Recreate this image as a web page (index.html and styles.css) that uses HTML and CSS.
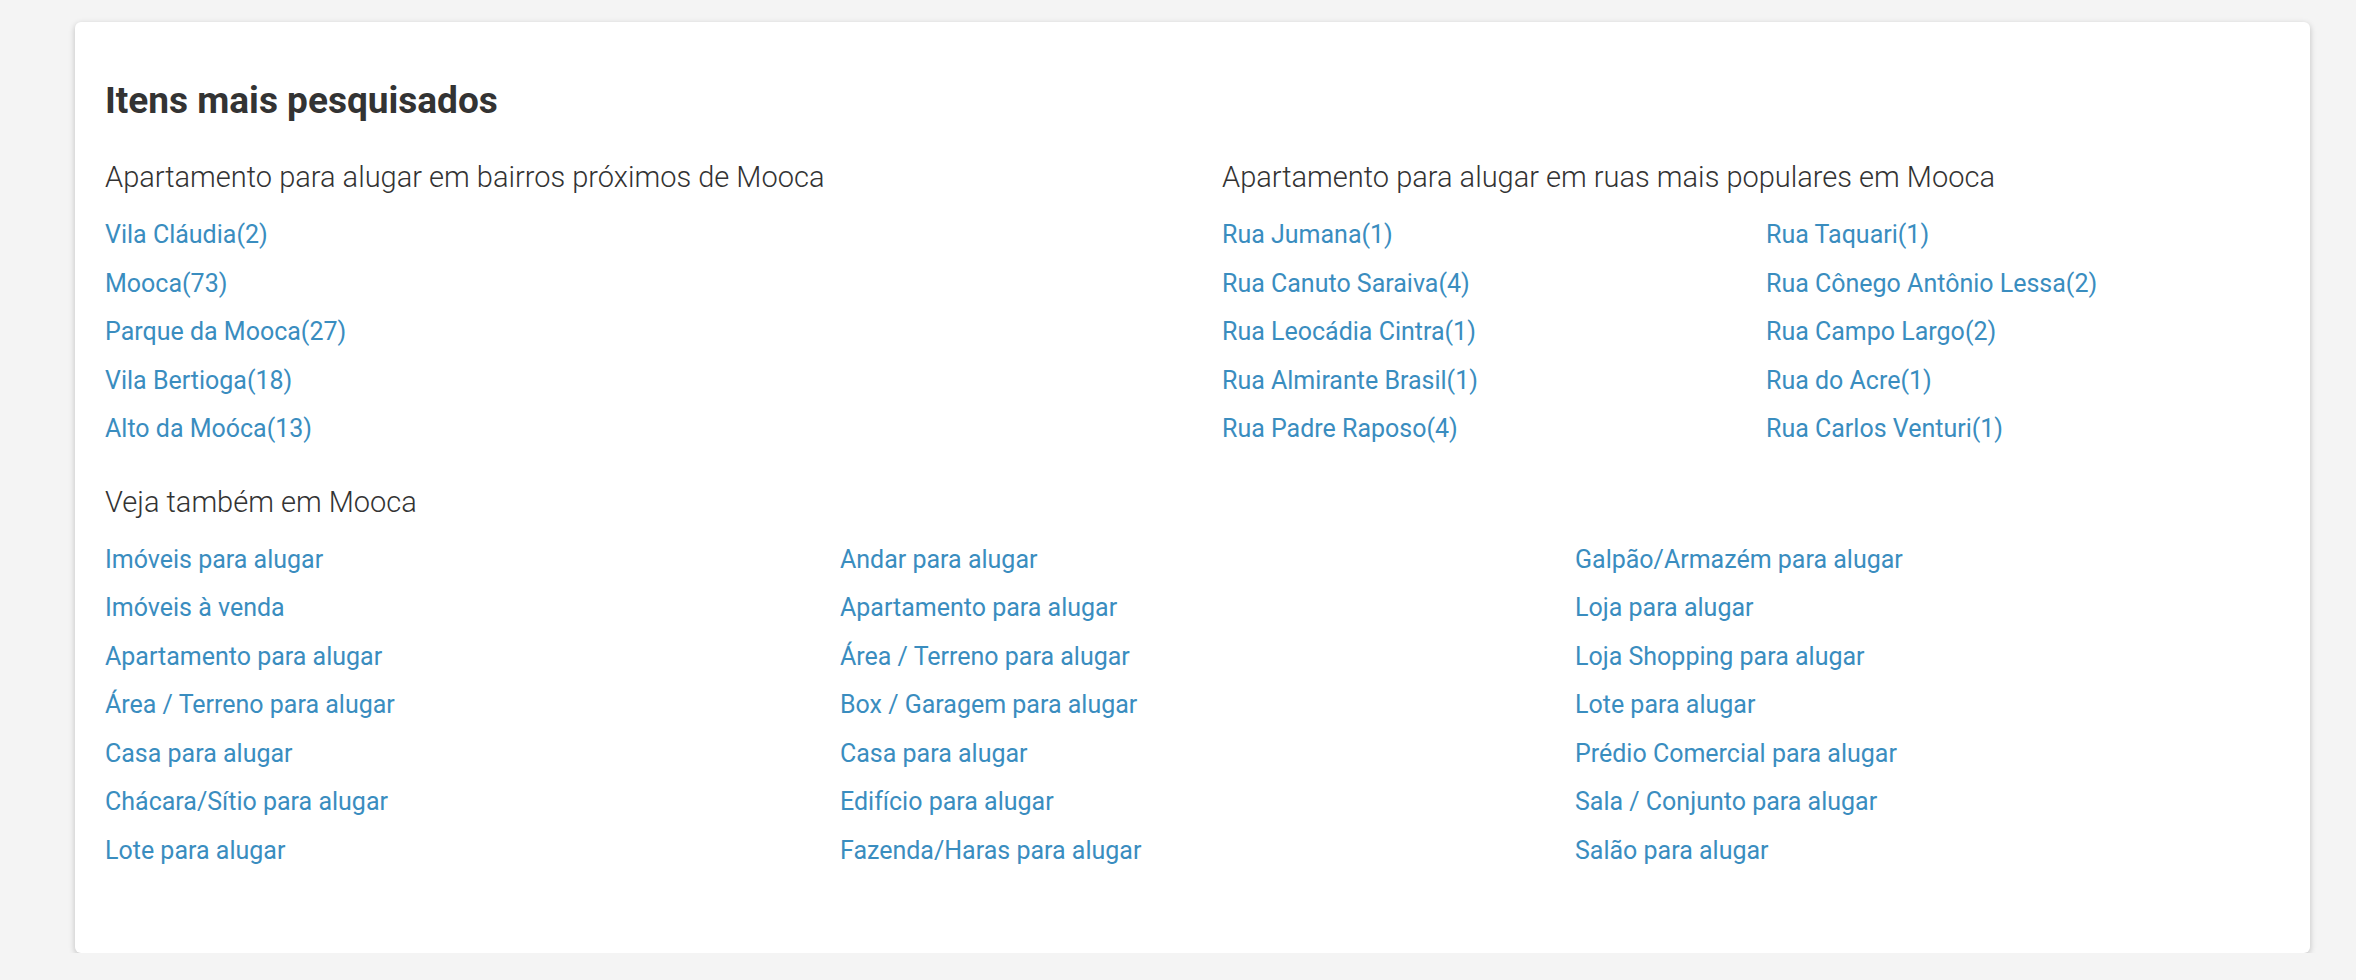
FILE: index.html
```html
<!DOCTYPE html>
<html lang="pt-BR">
<head>
<meta charset="utf-8">
<title>Itens mais pesquisados</title>
<link rel="stylesheet" href="styles.css">
</head>
<body>
<section class="card">
  <h2 class="card-title">Itens mais pesquisados</h2>
  <div class="top-row">
    <div class="group group-left">
      <h3 class="group-title">Apartamento para alugar em bairros próximos de Mooca</h3>
      <ul class="link-list">
        <li><a href="#">Vila Cláudia(2)</a></li>
        <li><a href="#">Mooca(73)</a></li>
        <li><a href="#">Parque da Mooca(27)</a></li>
        <li><a href="#">Vila Bertioga(18)</a></li>
        <li><a href="#">Alto da Moóca(13)</a></li>
      </ul>
    </div>
    <div class="group group-right">
      <h3 class="group-title">Apartamento para alugar em ruas mais populares em Mooca</h3>
      <div class="two-cols">
        <ul class="link-list">
          <li><a href="#">Rua Jumana(1)</a></li>
          <li><a href="#">Rua Canuto Saraiva(4)</a></li>
          <li><a href="#">Rua Leocádia Cintra(1)</a></li>
          <li><a href="#">Rua Almirante Brasil(1)</a></li>
          <li><a href="#">Rua Padre Raposo(4)</a></li>
        </ul>
        <ul class="link-list">
          <li><a href="#">Rua Taquari(1)</a></li>
          <li><a href="#">Rua Cônego Antônio Lessa(2)</a></li>
          <li><a href="#">Rua Campo Largo(2)</a></li>
          <li><a href="#">Rua do Acre(1)</a></li>
          <li><a href="#">Rua Carlos Venturi(1)</a></li>
        </ul>
      </div>
    </div>
  </div>
  <div class="group group-bottom">
    <h3 class="group-title">Veja também em Mooca</h3>
    <div class="three-cols">
      <ul class="link-list">
        <li><a href="#">Imóveis para alugar</a></li>
        <li><a href="#">Imóveis à venda</a></li>
        <li><a href="#">Apartamento para alugar</a></li>
        <li><a href="#">Área / Terreno para alugar</a></li>
        <li><a href="#">Casa para alugar</a></li>
        <li><a href="#">Chácara/Sítio para alugar</a></li>
        <li><a href="#">Lote para alugar</a></li>
      </ul>
      <ul class="link-list">
        <li><a href="#">Andar para alugar</a></li>
        <li><a href="#">Apartamento para alugar</a></li>
        <li><a href="#">Área / Terreno para alugar</a></li>
        <li><a href="#">Box / Garagem para alugar</a></li>
        <li><a href="#">Casa para alugar</a></li>
        <li><a href="#">Edifício para alugar</a></li>
        <li><a href="#">Fazenda/Haras para alugar</a></li>
      </ul>
      <ul class="link-list">
        <li><a href="#">Galpão/Armazém para alugar</a></li>
        <li><a href="#">Loja para alugar</a></li>
        <li><a href="#">Loja Shopping para alugar</a></li>
        <li><a href="#">Lote para alugar</a></li>
        <li><a href="#">Prédio Comercial para alugar</a></li>
        <li><a href="#">Sala / Conjunto para alugar</a></li>
        <li><a href="#">Salão para alugar</a></li>
      </ul>
    </div>
  </div>
</section>
</body>
</html>
```

FILE: styles.css
```css
html, body {
  margin: 0;
  padding: 0;
}

body {
  background: #f4f4f4;
  font-family: Roboto, "Liberation Sans", sans-serif;
  color: #333;
  padding: 22px 0 0 75px;
}

.card {
  box-sizing: border-box;
  width: 2235px;
  background: #fff;
  border-radius: 6px;
  box-shadow: 0 2px 6px rgba(0, 0, 0, 0.22);
  padding: 57px 0 78px 30px;
}

.card-title {
  margin: 0 0 36px;
  font-size: 37px;
  line-height: 44px;
  font-weight: 700;
  color: #333;
}

.top-row {
  display: flex;
}

.group-left {
  width: 1117px;
  flex: none;
}

.group-right {
  flex: 1;
}

.group-title {
  margin: 0 0 16px;
  font-size: 29px;
  line-height: 36px;
  font-weight: 300;
  color: #333;
}

.group-bottom {
  margin-top: 30px;
}

.two-cols {
  display: grid;
  grid-template-columns: 544px 1fr;
}

.three-cols {
  display: grid;
  grid-template-columns: 735px 735px 1fr;
}

.link-list {
  list-style: none;
  margin: 0;
  padding: 0;
}

.link-list li {
  font-size: 25px;
  line-height: 48.5px;
}

.link-list a {
  color: #3a8dbf;
  text-decoration: none;
}
```
